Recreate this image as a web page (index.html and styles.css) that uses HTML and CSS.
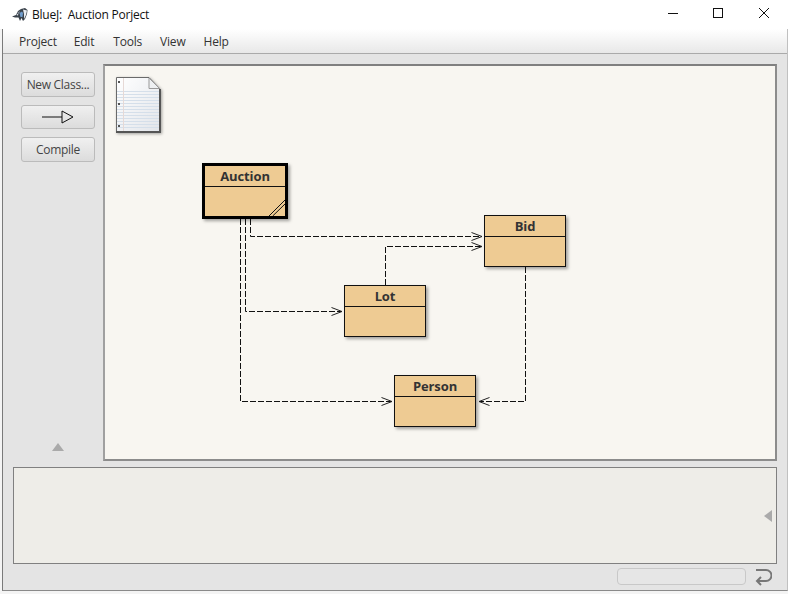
FILE: index.html
```html
<!DOCTYPE html>
<html lang="en">
<head>
<meta charset="utf-8">
<title>BlueJ: Auction Porject</title>
<link rel="stylesheet" href="styles.css">
</head>
<body>
<div class="app">
  <header class="titlebar">
    <svg class="bird" width="17" height="14" viewBox="0 0 17 14">
      <path d="M0 8.500 L4 7 L6 3 L9 1 L13 0 L15.500 2 L15 6 L13 11 L11 13 L9.500 10 L8 13 L6.500 9.500 L3 9.500 Z" fill="#3a424b"/>
      <path d="M7.500 5 L10 3.500 L11 5 L10.500 9 L8.500 9 Z" fill="#6f9ccc"/>
      <path d="M11 1.500 L15 2.500 L14 7 L12 11 L12 6 Z" fill="#e9edf2"/>
      <path d="M5 5 L8 3 L7 6 Z" fill="#8b939c"/>
      <circle cx="5.500" cy="6.800" r=".8" fill="#e6ecf2"/>
    </svg>
    <span class="title">BlueJ:&nbsp; Auction Porject</span>
    <div class="winctl">
      <svg width="46" height="29" viewBox="0 0 46 29"><path d="M19 13.500 H29" stroke="#111" fill="none"/></svg>
      <svg width="46" height="29" viewBox="0 0 46 29"><rect x="18.500" y="8.500" width="9" height="9" stroke="#111" fill="none"/></svg>
      <svg width="46" height="29" viewBox="0 0 46 29"><path d="M18 8 L28 18 M28 8 L18 18" stroke="#111" fill="none"/></svg>
    </div>
  </header>
  <div class="frame">
    <nav class="menubar">
      <span>Project</span><span>Edit</span><span>Tools</span><span>View</span><span>Help</span>
    </nav>
    <div class="main">
      <aside class="sidebar">
        <button class="btn">New Class...</button>
        <button class="btn btn-arrow">
          <svg width="32" height="14" viewBox="0 0 32 14"><path d="M0 7 H20 M20 1 L31 7 L20 13 Z" stroke="#111" fill="none"/></svg>
        </button>
        <button class="btn">Compile</button>
        <svg class="tri-up" width="12" height="8" viewBox="0 0 12 8"><path d="M6 0 L12 8 H0 Z" fill="#aaa"/></svg>
      </aside>
      <section class="diagram">
        <svg class="readme" width="50" height="62" viewBox="0 0 50 62">
          <defs>
            <linearGradient id="pg" x1="0" y1="0" x2="1" y2="1">
              <stop offset="0" stop-color="#ffffff"/>
              <stop offset="1" stop-color="#e2e5ea"/>
            </linearGradient>
          </defs>
          <path d="M1.500 1.500 H34 L45 13 V56 H1.500 Z" fill="url(#pg)" stroke="#6a6a6a"/>
          <path d="M2 15.500 H44 M2 18.500 H44 M2 21.500 H44 M2 24.500 H44 M2 27.500 H44 M2 30.500 H44 M2 33.500 H44 M2 36.500 H44 M2 39.500 H44 M2 42.500 H44 M2 45.500 H44 M2 48.500 H44 M2 51.500 H44" stroke="#d5dfea"/>
          <path d="M8.500 2 V55" stroke="#e6d9d6"/>
          <path d="M34 2 V12.500 H44.500 Z" fill="#eef0f2" stroke="#999"/>
          <path d="M45 13 V56 H1" stroke="#555" stroke-width="2" fill="none"/>
          <rect x="3" y="5" width="2" height="2" fill="#555"/>
          <rect x="3" y="27" width="2" height="2" fill="#555"/>
          <rect x="3" y="49" width="2" height="2" fill="#555"/>
        </svg>
        <svg class="arrows" width="670" height="393" viewBox="105 66 670 393">
          <g fill="none" stroke="#111" stroke-dasharray="6 2">
            <path d="M240.500 219 V401.500 H392"/>
            <path d="M245.500 219 V311.500 H342"/>
            <path d="M250.500 219 V236.500 H482"/>
            <path d="M385.500 285 V246.500 H482"/>
            <path d="M525.500 267 V401.500 H479"/>
          </g>
          <g fill="none" stroke="#222">
            <path d="M331.500 307.500 L342 311.500 L331.500 315.500"/>
            <path d="M471.500 232.500 L482 236.500 L471.500 240.500"/>
            <path d="M471.500 242.500 L482 246.500 L471.500 250.500"/>
            <path d="M381.500 397.500 L392 401.500 L381.500 405.500"/>
            <path d="M489.500 397.500 L479 401.500 L489.500 405.500"/>
          </g>
        </svg>
        <div class="node node-selected node-auction">
          <div class="node-name">Auction</div>
          <svg class="hatch" width="21" height="18" viewBox="0 0 21 18"><path d="M5 18 L21 2 M8.700 18 L21 6" stroke="#111" fill="none"/></svg>
        </div>
        <div class="node node-bid"><div class="node-name">Bid</div></div>
        <div class="node node-lot"><div class="node-name">Lot</div></div>
        <div class="node node-person"><div class="node-name">Person</div></div>
      </section>
    </div>
    <section class="terminal">
      <svg class="tri-left" width="8" height="12" viewBox="0 0 8 12"><path d="M0 6 L8 0 V12 Z" fill="#aaa"/></svg>
    </section>
    <footer class="status">
      <div class="statusbox"></div>
      <svg width="20" height="18" viewBox="0 0 20 18"><path d="M4 2 H14 A5.500 5.500 0 0 1 14 13 H5 M9 9 L5 13 L9 17" fill="none" stroke="#777" stroke-width="2"/></svg>
    </footer>
  </div>
</div>
</body>
</html>
```

FILE: styles.css
```css
* { box-sizing: border-box; }
html, body { margin: 0; padding: 0; }
body { background: #f4f4f4; font-family: "Open Sans", "Liberation Sans", sans-serif; }
.app { width: 788px; height: 594px; overflow: hidden; display: flex; flex-direction: column; }

.titlebar { height: 29px; flex: none; background: #fff; display: flex; align-items: center; padding-left: 12px; color: #111; font-size: 12px; letter-spacing: -.23px; }
.bird { flex: none; margin-right: 3px; }
.title { flex: 1; }
.winctl { display: flex; flex: none; margin-right: 1px; }
.winctl svg { display: block; }

.frame { margin-left: 2px; width: 786px; height: 562px; flex: none; background: #e4e4e4; border-left: 1px solid #7a7a7a; border-bottom: 1px solid #8a8a8a; border-right: 1px solid #c0c0c0; display: flex; flex-direction: column; }

.menubar { height: 25px; flex: none; display: flex; gap: 18px; align-items: center; padding: 0 0 0 16px; font-size: 12px; letter-spacing: -.2px; color: #333; background: linear-gradient(#ffffff, #e8e8e8); border-bottom: 1px solid #aaa; }
.menubar span:nth-child(2) { margin-left: -1px; margin-right: 1px; }

.main { display: flex; flex: none; padding-top: 10px; height: 407px; }
.sidebar { width: 100px; flex: none; padding: 8px 8px 0 18px; display: flex; flex-direction: column; gap: 8px; position: relative; }
.btn { width: 74px; height: 25px; flex: none; padding: 0 0 1px; border: 1px solid #bbb; border-radius: 3px; background: linear-gradient(#f0f0f0, #dcdcdc); font: 12px "Open Sans", "Liberation Sans", sans-serif; letter-spacing: -.3px; color: #444; display: flex; align-items: center; justify-content: center; }
.btn-arrow { height: 24px; }
.tri-up { position: absolute; left: 49px; top: 379px; }

.diagram { width: 674px; height: 397px; flex: none; position: relative; background: #f8f6f1; border: 2px solid; border-color: #808080 #8c8c8c #8c8c8c #a0a0a0; }
.readme { position: absolute; left: 10px; top: 10px; overflow: visible; filter: drop-shadow(1px 1px 1.500px rgba(0, 0, 0, .35)); }
.arrows { position: absolute; left: 0; top: 0; }

.node { position: absolute; width: 82px; height: 52px; background: #eecb93; border: 1px solid #111; box-shadow: 2px 2px 3px rgba(0, 0, 0, .35); color: #333; }
.node-name { height: 21px; border-bottom: 1px solid #111; text-align: center; font-size: 13px; font-weight: 700; line-height: 21px; letter-spacing: -.1px; }
.node-selected { border-width: 3px; border-color: #000; width: 86px; height: 56px; }
.node-auction { left: 97px; top: 97px; }
.node-auction .node-name { height: 21px; line-height: 20px; }
.hatch { position: absolute; right: 0; bottom: 0; }
.node-bid { left: 379px; top: 149px; }
.node-lot { left: 239px; top: 219px; }
.node-person { left: 289px; top: 309px; }

.terminal { width: 764px; height: 97px; flex: none; margin: 6px 0 0 10px; background: #eeede8; border: 1px solid #808080; position: relative; }
.tri-left { position: absolute; right: 4px; top: 42px; }

.status { flex: 1; display: flex; align-items: flex-start; padding: 4px 0 0 614px; gap: 6px; }
.statusbox { width: 129px; height: 17px; background: #e6e6e6; border: 1px solid #c8c8c8; border-radius: 4px; }
```
